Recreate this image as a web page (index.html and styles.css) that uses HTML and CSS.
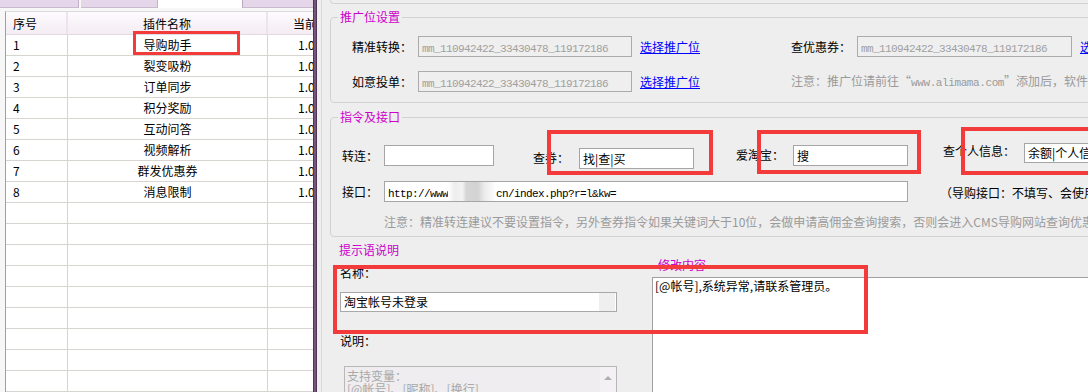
FILE: index.html
```html
<!DOCTYPE html>
<html lang="zh-CN">
<head>
<meta charset="utf-8">
<title>插件设置</title>
<link rel="stylesheet" href="styles.css">
</head>
<body>
<div class="app">
  <div class="left">
    <div class="tabs">
      <div class="tab t1"></div>
      <div class="tab t2"></div>
      <div class="tab t3"></div>
      <div class="tab t4"></div>
    </div>
    <div class="page">
      <div class="grid">
        <div class="row head"><div class="c1">序号</div><div class="c2">插件名称</div><div class="c3">当前版本</div></div>
        <div class="row"><div class="c1">1</div><div class="c2">导购助手</div><div class="c3">1.0.0</div></div>
        <div class="row"><div class="c1">2</div><div class="c2">裂变吸粉</div><div class="c3">1.0.0</div></div>
        <div class="row"><div class="c1">3</div><div class="c2">订单同步</div><div class="c3">1.0.0</div></div>
        <div class="row"><div class="c1">4</div><div class="c2">积分奖励</div><div class="c3">1.0.0</div></div>
        <div class="row"><div class="c1">5</div><div class="c2">互动问答</div><div class="c3">1.0.0</div></div>
        <div class="row"><div class="c1">6</div><div class="c2">视频解析</div><div class="c3">1.0.0</div></div>
        <div class="row"><div class="c1">7</div><div class="c2">群发优惠券</div><div class="c3">1.0.0</div></div>
        <div class="row"><div class="c1">8</div><div class="c2">消息限制</div><div class="c3">1.0.0</div></div>
        <div class="row"><div class="c1"></div><div class="c2"></div><div class="c3"></div></div>
        <div class="row"><div class="c1"></div><div class="c2"></div><div class="c3"></div></div>
        <div class="row"><div class="c1"></div><div class="c2"></div><div class="c3"></div></div>
        <div class="row"><div class="c1"></div><div class="c2"></div><div class="c3"></div></div>
        <div class="row"><div class="c1"></div><div class="c2"></div><div class="c3"></div></div>
        <div class="row"><div class="c1"></div><div class="c2"></div><div class="c3"></div></div>
        <div class="row"><div class="c1"></div><div class="c2"></div><div class="c3"></div></div>
        <div class="row"><div class="c1"></div><div class="c2"></div><div class="c3"></div></div>
        <div class="row"><div class="c1"></div><div class="c2"></div><div class="c3"></div></div>
        <div class="row"><div class="c1"></div><div class="c2"></div><div class="c3"></div></div>
      </div>
    </div>
  </div>
  <div class="splitter"></div>
  <div class="right">
    <div class="rin">
      <div class="stub"></div>
      <fieldset class="group g1">
        <legend>推广位设置</legend>
        <div class="g1body">
          <div class="frow">
            <span class="lbl w66">精准转换：</span>
            <div class="tb dis w214"><span class="mono">mm_110942422_33430478_119172186</span></div>
            <a class="link">选择推广位</a>
            <span class="lbl w66 col2">查优惠券：</span>
            <div class="tb dis w215"><span class="mono">mm_110942422_33430478_119172186</span></div>
            <a class="link">选择推广位</a>
          </div>
          <div class="frow">
            <span class="lbl w66">如意投单：</span>
            <div class="tb dis w214"><span class="mono">mm_110942422_33430478_119172186</span></div>
            <a class="link">选择推广位</a>
            <span class="note col2">注意：推广位请前往“<span class="mono">www.alimama.com</span>”添加后，软件上选择推广位即可</span>
          </div>
        </div>
      </fieldset>
      <fieldset class="group g2">
        <legend>指令及接口</legend>
        <div class="g2body">
          <div class="frow r1">
            <span class="lbl w42 mt6">转连：</span>
            <div class="tb w110 mt2"></div>
            <span class="lbl w46 mt8 ml39">查券：</span>
            <div class="tb w115 mt5">找|查|买</div>
            <span class="lbl w57 mt5 ml42">爱淘宝：</span>
            <div class="tb w115 mt2">搜</div>
            <span class="lbl w81 mt1 ml35">查个人信息：</span>
            <div class="tb w115 h20">余额|个人信息</div>
          </div>
          <div class="frow r2">
            <span class="lbl w42">接口：</span>
            <div class="tb w524"><span class="mono">http://www</span><span class="blur"></span><span class="mono">cn/index.php?r=l&amp;kw=</span></div>
            <span class="hint">（导购接口：不填写、会使用默认接口）</span>
          </div>
          <div class="note n2">注意：精准转连建议不要设置指令，另外查券指令如果关键词大于10位，会做申请高佣金查询搜索，否则会进入CMS导购网站查询优惠券信息</div>
        </div>
      </fieldset>
      <div class="sec3">
        <div class="sec3-title">提示语说明</div>
        <div class="sec3-body">
          <div class="colL">
            <div class="lbl">名称：</div>
            <div class="nm"><span>淘宝帐号未登录</span><span class="sb"></span></div>
            <div class="lbl lbl2">说明：</div>
            <div class="desc">
              <div class="txt">支持变量：<br>[@帐号]、[昵称]、[换行]</div>
              <div class="vs"><span class="up"></span></div>
            </div>
          </div>
          <div class="colR">
            <div class="cap">修改内容</div>
            <div class="ta">[@帐号],系统异常,请联系管理员。</div>
          </div>
        </div>
      </div>
    </div>
  </div>
  <div class="mark m1"></div>
  <div class="mark m2"></div>
  <div class="mark m3"></div>
  <div class="mark m4"></div>
  <div class="mark m5"></div>
</div>
</body>
</html>
```

FILE: styles.css
```css
* { box-sizing: border-box; }
html, body { margin: 0; padding: 0; }
body {
  width: 1088px;
  height: 392px;
  overflow: hidden;
  background: #eeeeee;
  font-family: "Noto Sans CJK SC", "Liberation Sans", sans-serif;
  font-size: 12px;
  line-height: 14px;
  color: #000;
}
.app { position: relative; display: flex; width: 1088px; height: 392px; }

/* left list */
.left { flex: none; width: 313px; height: 392px; overflow: hidden; display: flex; flex-direction: column; background: #f7f7f7; }
.tabs { flex: none; display: flex; height: 8px; }
.tab { height: 8px; background: #e6d6e9; border-bottom: 1px solid #cbb9cf; }
.t1 { width: 79px; border-right: 1px solid #c4b2c8; }
.t2 { width: 77px; margin-left: 2px; border-right: 1px solid #c4b2c8; }
.t3 { width: 84px; background: #fff; border-bottom: none; }
.t4 { flex: 1; border-left: 1px solid #b9a8bd; }
.page { flex: 1; padding: 3px 0 0 5px; min-height: 0; }
.grid { height: 100%; background: #fff; border-left: 1px solid #a0a0a0; border-top: 1px solid #dcdcdc; overflow: hidden; }
.row { display: grid; grid-template-columns: 62px 200px 120px; height: 21px; border-bottom: 1px solid #d8d4d0; }
.row > div { border-right: 1px solid #d8d4d0; line-height: 20px; white-space: nowrap; overflow: hidden; }
.c1 { padding-left: 7px; }
.c2 { text-align: center; }
.c3 { padding-left: 30px; }
.row.head { height: 23px; background: linear-gradient(#fdfbfd, #f4ecf4); border-bottom: 1px solid #e2dae2; }
.row.head > div { border-right: 2px solid #eee2ee; line-height: 18px; padding-top: 3px; }
.row.head .c3 { padding-left: 25px; }

.splitter { flex: none; width: 4px; background: #74557c; border-left: 1px solid #4e3556; border-right: 1px solid #4e3556; }

/* right settings */
.right { flex: 1; min-width: 0; height: 392px; overflow: hidden; padding-left: 4px; }
.rin { height: 100%; border-left: 1px solid #dadada; padding-left: 8px; }
.stub { width: 900px; height: 4px; border: 1px solid #d2d2d2; border-top: none; border-radius: 0 0 4px 4px; }
.group { width: 900px; margin: 0; padding: 0; border: 1px solid #d2d2d2; border-radius: 4px; min-width: 0; }
.group legend { margin-left: 7px; padding: 0 2px; color: #cc00cc; line-height: 14px; }
.g1 { margin-top: 6px; }
.g2 { margin-top: 7px; }
.g1body { padding: 12px 0 10px 21px; display: flex; flex-direction: column; gap: 14px; }
.g2body { padding: 19px 0 7px 11px; }

.frow { display: flex; align-items: center; white-space: nowrap; height: 21px; }
.frow > * { flex: none; }
.r1 { align-items: flex-start; height: 26px; }
.r2 { margin-top: 12px; }

.tb { height: 21px; border: 1px solid #a5a5a5; background: #fff; padding-left: 3px; line-height: 19px; overflow: hidden; white-space: nowrap; }
.tb.dis { background: #efefef; color: #a0a0a0; border-color: #ababab; }
.h20 { height: 20px; line-height: 18px; }
.mono { font-family: "Liberation Mono", monospace; font-size: 11px; letter-spacing: -0.6px; }
.blur { display: inline-block; width: 48px; height: 19px; vertical-align: top; background: linear-gradient(90deg, #fff 0, #ededed 14%, #f3f3f3 30%, #d6d6d6 38%, #d3d3d3 62%, #ebebeb 76%, #fff 100%); }
.link { color: #0000ff; text-decoration: underline; margin-left: 8px; cursor: pointer; }
.col2 { margin-left: 91px; }
.note { color: #9a9a9a; }
.note .mono { letter-spacing: -0.4px; }
.n2 { margin: 13px 0 0 42px; white-space: nowrap; }
.hint { margin-left: 32px; margin-top: 2px; }

.w42 { width: 42px; } .w46 { width: 46px; } .w57 { width: 57px; } .w66 { width: 66px; } .w81 { width: 81px; }
.w110 { width: 110px; } .w115 { width: 115px; } .w214 { width: 214px; } .w215 { width: 215px; } .w524 { width: 524px; }
.mt1 { margin-top: 1px; } .mt2 { margin-top: 2px; } .mt5 { margin-top: 5px; } .mt6 { margin-top: 6px; } .mt8 { margin-top: 8px; }
.ml35 { margin-left: 35px; } .ml39 { margin-left: 39px; } .ml42 { margin-left: 42px; }

.sec3 { margin-top: 6px; }
.sec3-title { color: #cc00cc; padding-left: 9px; }
.sec3-body { display: flex; align-items: flex-start; }
.colL { flex: none; width: 277px; margin-left: 10px; margin-top: 9px; }
.colR { flex: none; width: 500px; margin-left: 35px; margin-top: 1px; }
.cap { color: #cc00cc; padding-left: 6px; }
.nm { margin-top: 12px; height: 20px; display: flex; justify-content: space-between; border: 1px solid #a8a8a8; background: #fff; line-height: 18px; padding-left: 3px; }
.nm .sb { width: 16px; background: #efefef; margin-right: 1px; }
.lbl2 { margin-top: 22px; }
.desc { margin: 18px 0 0 4px; width: 273px; height: 60px; border: 1px solid #b8b8b8; background: #efedef; color: #a8a8a8; display: flex; justify-content: space-between; }
.desc .txt { padding: 2px 0 0 2px; line-height: 13px; }
.desc .vs { width: 16px; background: #f4f1f4; display: flex; justify-content: center; padding-top: 9px; }
.up { width: 0; height: 0; border-left: 4px solid transparent; border-right: 4px solid transparent; border-bottom: 4px solid #b0b0b0; }
.ta { margin-top: 5px; height: 200px; border: 1px solid #a0a0a0; background: #fff; padding: 1px 0 0 2px; }

/* annotation boxes */
.mark { position: absolute; border: 4px solid #f43b3b; pointer-events: none; }
.m1 { left: 133px; top: 31px; width: 107px; height: 24px; border-width: 3px; }
.m2 { left: 547px; top: 130px; width: 166px; height: 45px; }
.m3 { left: 757px; top: 130px; width: 164px; height: 44px; }
.m4 { left: 961px; top: 127px; width: 200px; height: 48px; }
.m5 { left: 333px; top: 265px; width: 535px; height: 69px; }
```
